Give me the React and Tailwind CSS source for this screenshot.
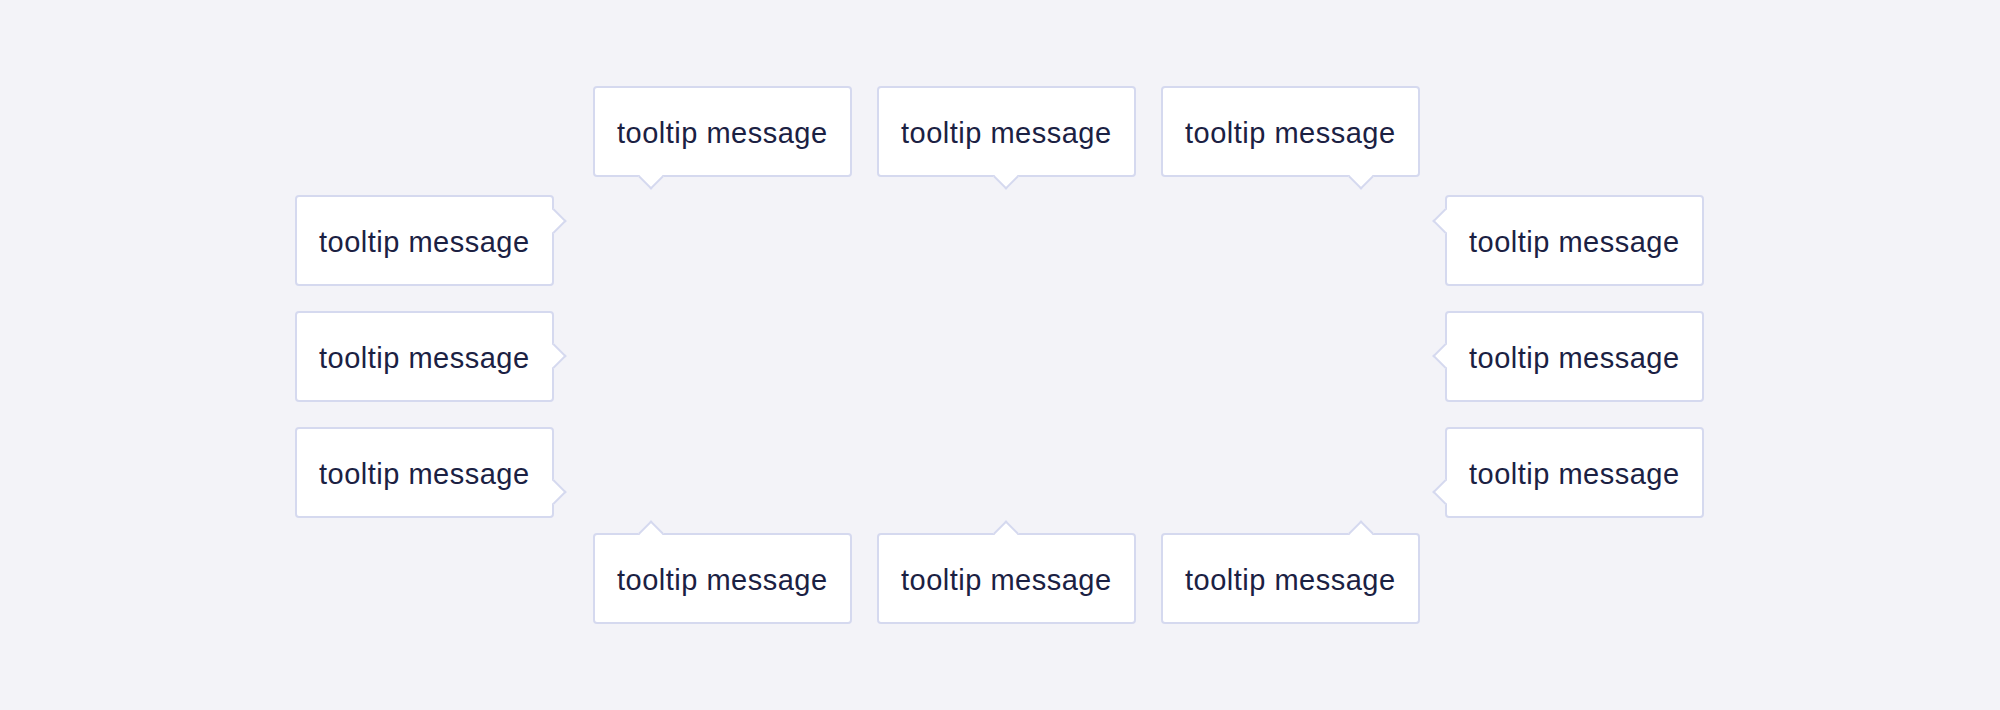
const BORDER = "border-2 border-[#d5d9ef]";

function Arrow({ side, pos }) {
  const base = `absolute w-[18px] h-[18px] bg-white ${BORDER} rotate-45`;
  if (side === "bottom") {
    return <span className={`${base} border-t-0 border-l-0 -bottom-[11px] ${pos}`} />;
  }
  if (side === "top") {
    return <span className={`${base} border-b-0 border-r-0 -top-[11px] ${pos}`} />;
  }
  if (side === "right") {
    return <span className={`${base} border-b-0 border-l-0 -right-[11px] ${pos}`} />;
  }
  return <span className={`${base} border-t-0 border-r-0 -left-[11px] ${pos}`} />;
}

function Tip({ side, pos }) {
  return (
    <div
      className={`relative w-[259px] h-[91px] bg-white ${BORDER} rounded-[4px] flex items-center pl-[22px] pt-[5px] text-[29px] tracking-[0.5px] text-[#1b2143]`}
      style={{ fontFamily: '"Liberation Sans", Arial, sans-serif' }}
    >
      <Arrow side={side} pos={pos} />
      <span className="relative">tooltip message</span>
    </div>
  );
}

export default function App() {
  return (
    <div className="w-[2000px] h-[710px] bg-[#f3f3f8] pt-[86px]">
      <div className="flex gap-[25px] pl-[593px]">
        <Tip side="bottom" pos="left-[47px]" />
        <Tip side="bottom" pos="left-[118px]" />
        <Tip side="bottom" pos="right-[48px]" />
      </div>

      <div className="flex justify-between pl-[295px] pr-[296px] mt-[18px]">
        <div className="flex flex-col gap-[25px]">
          <Tip side="right" pos="top-[15px]" />
          <Tip side="right" pos="top-[34px]" />
          <Tip side="right" pos="bottom-[15px]" />
        </div>
        <div className="flex flex-col gap-[25px]">
          <Tip side="left" pos="top-[15px]" />
          <Tip side="left" pos="top-[34px]" />
          <Tip side="left" pos="bottom-[15px]" />
        </div>
      </div>

      <div className="flex gap-[25px] pl-[593px] mt-[15px]">
        <Tip side="top" pos="left-[47px]" />
        <Tip side="top" pos="left-[118px]" />
        <Tip side="top" pos="right-[48px]" />
      </div>
    </div>
  );
}
